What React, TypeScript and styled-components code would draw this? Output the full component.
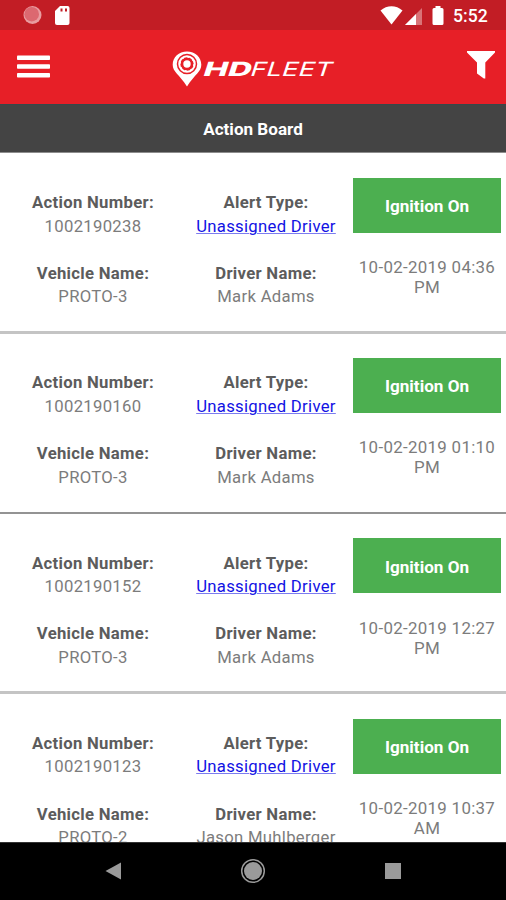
import React from 'react';
import styled, { createGlobalStyle, css } from 'styled-components';

const GlobalStyle = createGlobalStyle`
  * { box-sizing: border-box; }
  body { margin: 0; background: #fff; font-family: Roboto, "Liberation Sans", sans-serif; }
`;

const Screen = styled.div`
  display: flex;
  flex-direction: column;
  width: 506px;
  height: 900px;
  overflow: hidden;
  background: #fff;
`;

const StatusBar = styled.header`
  display: flex;
  align-items: center;
  justify-content: space-between;
  flex: none;
  height: 30px;
  padding: 0 18px 0 23px;
  background: #c21d25;
  color: #fff;
`;

const StatusGroup = styled.div`
  display: flex;
  align-items: center;
`;

const Clock = styled.span`
  width: 35px;
  font-size: 17.6px;
  font-weight: 500;
  line-height: 20px;
  white-space: nowrap;
  margin: 1px 0 0 9px;
`;

const AppBar = styled.div`
  display: flex;
  align-items: center;
  justify-content: space-between;
  flex: none;
  height: 74px;
  padding: 0 10px 0 17px;
  background: #e71f27;
`;

const IconButton = styled.button`
  display: flex;
  padding: 0;
  border: 0;
  background: none;
`;

const Title = styled.h1`
  flex: none;
  height: 49px;
  margin: 0;
  border-top: 1px solid #38474a;
  border-bottom: 1px solid #8d8d8d;
  background: #444;
  color: #fff;
  font-size: 17.1px;
  font-weight: 700;
  line-height: 49px;
  text-align: center;
`;

const List = styled.main`
  flex: 1;
  min-height: 0;
  padding-top: 0.7px;
  overflow: hidden;
`;

const Card = styled.article<{ $divider: string; $thickness: number }>`
  display: grid;
  grid-template-columns: 186px 160px 160px;
  height: 180.2px;
  border-bottom: ${p => p.$thickness}px solid ${p => p.$divider};
  text-align: center;
`;

const Column = styled.div`
  display: flex;
  flex-direction: column;
  gap: 24px;
  padding-top: 37.5px;
`;

const Field = styled.div`
  font-size: 16.7px;
  line-height: 23.4px;
  white-space: nowrap;
`;

const Label = styled.div`
  color: #5c5c5c;
  font-weight: 700;
  letter-spacing: 0.3px;
`;

const valueText = css`
  font-weight: 400;
  letter-spacing: 0.3px;
`;

const Value = styled.div`
  ${valueText}
  color: #7c7c7c;
`;

const AlertLink = styled.a`
  ${valueText}
  color: #1212e4;
  text-decoration: underline #7c7cf0;
  text-decoration-thickness: 1px;
`;

const Side = styled.div`
  display: flex;
  flex-direction: column;
  padding: 24.3px 5px 0 7px;
`;

const IgnitionButton = styled.button`
  height: 55px;
  padding: 1.4px 0 0;
  border: 0;
  background: #4caf50;
  color: #fff;
  font: 700 17.1px/20px Roboto, sans-serif;
`;

const Timestamp = styled.time`
  margin-top: 24.2px;
  color: #7c7c7c;
  font-size: 16.9px;
  line-height: 20px;
  letter-spacing: 0.3px;
`;

const NavBar = styled.footer`
  display: flex;
  flex: none;
  align-items: center;
  justify-content: space-between;
  height: 58px;
  padding: 0 104px 2px;
  border-top: 1px solid #333;
  background: #000;
`;

const records = [
  { number: '1002190238', vehicle: 'PROTO-3', driver: 'Mark Adams', time: '10-02-2019 04:36 PM', divider: '#c4c4c4', thickness: 3 },
  { number: '1002190160', vehicle: 'PROTO-3', driver: 'Mark Adams', time: '10-02-2019 01:10 PM', divider: '#939393', thickness: 2 },
  { number: '1002190152', vehicle: 'PROTO-3', driver: 'Mark Adams', time: '10-02-2019 12:27 PM', divider: '#c4c4c4', thickness: 3 },
  { number: '1002190123', vehicle: 'PROTO-2', driver: 'Jason Muhlberger', time: '10-02-2019 10:37 AM', divider: '#c4c4c4', thickness: 3 },
];

const Logo = () => (
  <svg width="172" height="40" viewBox="0 0 172 40" fill="#fff">
    <path d="M15 4.500C6.800 4.500 .7 10.300 .7 17.800c0 7.200 6.500 9.500 14.300 21.700 7.800-12.200 14.300-14.500 14.300-21.700C29.300 10.300 23.200 4.500 15 4.500z" />
    <circle cx="15" cy="17" r="9.500" fill="none" stroke="#e71f27" strokeWidth="1.500" />
    <circle cx="15" cy="17" r="5.200" fill="none" stroke="#e71f27" strokeWidth="3" />
    <circle cx="15" cy="17" r="7" fill="none" stroke="#fff" strokeWidth="1.200" strokeDasharray="2.100 3.400" />
    <g transform="translate(30 29) skewX(-18)" fontFamily="Inter, sans-serif">
      <text fontSize="19.500" fontWeight="800" textLength="48" lengthAdjust="spacingAndGlyphs">HD</text>
      <text x="47" fontSize="19.500" fontWeight="400" textLength="82" lengthAdjust="spacingAndGlyphs">FLEET</text>
    </g>
  </svg>
);

export default function App() {
  return (
    <>
      <GlobalStyle />
      <Screen>
        <StatusBar>
          <StatusGroup>
            <svg width="48" height="24" viewBox="0 0 48 24">
              <circle cx="9.500" cy="12" r="9" fill="#e99ca0" />
              <circle cx="8.700" cy="11.200" r="7.300" fill="#dc6870" />
              <path d="M37 3h7.500a2 2 0 0 1 2 2v15a2 2 0 0 1-2 2H34a2 2 0 0 1-2-2V8z" fill="#fff" />
              <path d="M37.500 5.500h2v3h-2zM42 5.500h2v3h-2z" fill="#c21d25" />
            </svg>
          </StatusGroup>
          <StatusGroup>
            <svg width="64" height="24" viewBox="0 0 64 24" fill="#fff">
              <path d="M0.500 7.500C7 1.700 16 1.700 22.500 7.500L11.500 21.500z" />
              <path d="M42 5v17H25z" opacity=".38" />
              <path d="M36 11v11H25z" />
              <path d="M55.500 3h5v2H62a1.500 1.500 0 0 1 1.500 1.500v14A1.500 1.500 0 0 1 62 22h-8a1.500 1.500 0 0 1-1.500-1.500v-14A1.500 1.500 0 0 1 54 5h1.500z" />
            </svg>
            <Clock>5:52</Clock>
          </StatusGroup>
        </StatusBar>
        <AppBar>
          <IconButton aria-label="Menu">
            <svg width="33" height="24" viewBox="0 0 33 24" fill="#fff">
              <rect y="0.500" width="33" height="4.500" rx=".8" />
              <rect y="9.300" width="33" height="4.500" rx=".8" />
              <rect y="18" width="33" height="4.500" rx=".8" />
            </svg>
          </IconButton>
          <Logo />
          <IconButton aria-label="Filter">
            <svg width="30" height="34" viewBox="0 0 30 34" fill="#fff">
              <path d="M1 1H29V2.500L19.300 12.500V28.500H17.800L11 23.500V12.500L1 2.500z" />
            </svg>
          </IconButton>
        </AppBar>
        <Title>Action Board</Title>
        <List>
          {records.map(r => (
            <Card key={r.number} $divider={r.divider} $thickness={r.thickness}>
              <Column>
                <Field><Label>Action Number:</Label><Value>{r.number}</Value></Field>
                <Field><Label>Vehicle Name:</Label><Value>{r.vehicle}</Value></Field>
              </Column>
              <Column>
                <Field><Label>Alert Type:</Label><AlertLink>Unassigned Driver</AlertLink></Field>
                <Field><Label>Driver Name:</Label><Value>{r.driver}</Value></Field>
              </Column>
              <Side>
                <IgnitionButton>Ignition On</IgnitionButton>
                <Timestamp>{r.time}</Timestamp>
              </Side>
            </Card>
          ))}
        </List>
        <NavBar>
          <svg width="18" height="20" viewBox="0 0 18 20" fill="#9a9a9a"><path d="M1.500 10L17 1.500v17z" /></svg>
          <svg width="26" height="26" viewBox="0 0 26 26" fill="#9a9a9a">
            <circle cx="13" cy="13" r="9" />
            <circle cx="13" cy="13" r="11.300" fill="none" stroke="#9a9a9a" strokeWidth="1.500" />
          </svg>
          <svg width="18" height="18" viewBox="0 0 18 18" fill="#9a9a9a"><rect x="1" y="1" width="16" height="16" /></svg>
        </NavBar>
      </Screen>
    </>
  );
}
